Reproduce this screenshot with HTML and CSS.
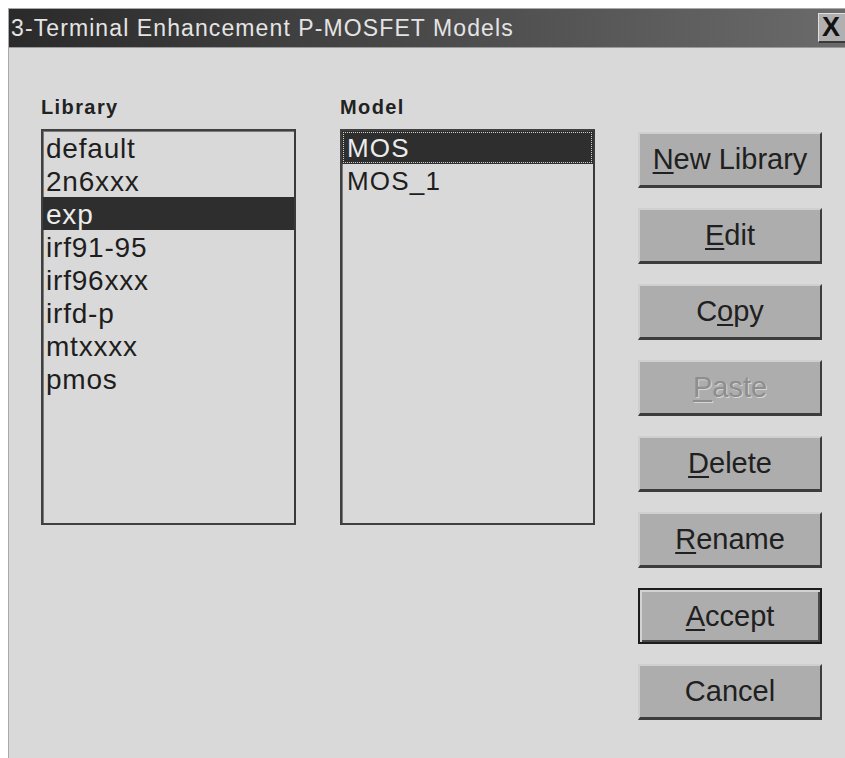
FILE: index.html
```html
<!DOCTYPE html>
<html lang="en">
<head>
<meta charset="utf-8">
<title>3-Terminal Enhancement P-MOSFET Models</title>
<link rel="stylesheet" href="styles.css">
</head>
<body>
<div class="window">
  <div class="titlebar">
    <span class="title">3-Terminal Enhancement P-MOSFET Models</span>
    <button class="close" type="button">X</button>
  </div>
  <div class="dialog">
    <div class="column">
      <div class="label">Library</div>
      <ul class="list">
        <li>default</li>
        <li>2n6xxx</li>
        <li class="selected">exp</li>
        <li>irf91-95</li>
        <li>irf96xxx</li>
        <li>irfd-p</li>
        <li>mtxxxx</li>
        <li>pmos</li>
      </ul>
    </div>
    <div class="column">
      <div class="label">Model</div>
      <ul class="list models">
        <li class="selected focused">MOS</li>
        <li>MOS_1</li>
      </ul>
    </div>
    <div class="buttons">
      <button class="btn" type="button"><u>N</u>ew Library</button>
      <button class="btn" type="button"><u>E</u>dit</button>
      <button class="btn" type="button">C<u>o</u>py</button>
      <button class="btn disabled" type="button"><u>P</u>aste</button>
      <button class="btn" type="button"><u>D</u>elete</button>
      <button class="btn" type="button"><u>R</u>ename</button>
      <button class="btn default" type="button"><u>A</u>ccept</button>
      <button class="btn" type="button">Cancel</button>
    </div>
  </div>
</div>
</body>
</html>
```
FILE: styles.css
```css
html, body {
  margin: 0;
  padding: 0;
  background: #ffffff;
  overflow: hidden;
  height: 758px;
}

body {
  padding: 8px 0 0 8px;
  font-family: "Liberation Sans", Arial, sans-serif;
}

.window {
  width: 852px;
  height: 760px;
  display: flex;
  flex-direction: column;
  background: #d9d9d9;
  border-top: 1px solid #a9a9a9;
  border-left: 1px solid #a9a9a9;
}

.titlebar {
  height: 38px;
  display: flex;
  align-items: center;
  justify-content: space-between;
  background: linear-gradient(to right, #2a2a2a 0%, #474747 45%, #6c6c6c 100%);
  border-bottom: 1px solid #9a9a9a;
  flex: none;
}

.title {
  color: #e4e4e4;
  font-size: 23px;
  letter-spacing: 1.1px;
  padding-left: 2px;
  white-space: nowrap;
}

.close {
  width: 34px;
  height: 30px;
  margin-right: 9px;
  padding: 0 0 0 3px;
  text-align: left;
  background: #b0b0b0;
  border: none;
  border-top: 1px solid #e0e0e0;
  border-left: 1px solid #e0e0e0;
  border-bottom: 2px solid #3a3a3a;
  font-family: "Liberation Sans", Arial, sans-serif;
  font-weight: bold;
  font-size: 27px;
  line-height: 27px;
  color: #111;
}

.dialog {
  display: flex;
  align-items: flex-start;
  padding: 46px 0 0 32px;
}

.column {
  width: 255px;
  margin-right: 44px;
  display: flex;
  flex-direction: column;
}

.column + .column {
  margin-right: 43px;
}

.label {
  font-size: 20px;
  font-weight: bold;
  letter-spacing: 1.4px;
  line-height: 26px;
  height: 26px;
  margin-bottom: 9px;
  color: #222;
}

.list {
  list-style: none;
  margin: 0;
  padding: 0;
  height: 396px;
  box-sizing: border-box;
  border: 2px solid #404040;
  border-right-color: #3a3a3a;
  box-shadow: inset 1px 1px 0 #7a7a7a;
}

.list li {
  height: 33px;
  line-height: 33px;
  padding: 1px 0 0 3px;
  box-sizing: border-box;
  font-size: 28px;
  letter-spacing: 0.8px;
  color: #1e1e1e;
  white-space: nowrap;
}

.models li {
  padding-left: 5px;
  letter-spacing: 1.2px;
  font-size: 26px;
}

.list li.selected {
  background: #2e2e2e;
  color: #ececec;
}

.list li.focused {
  outline: 1px dotted #d0d0d0;
  outline-offset: -2px;
}

.buttons {
  display: flex;
  flex-direction: column;
  gap: 20px;
  padding-top: 38px;
}

.btn {
  width: 184px;
  height: 56px;
  box-sizing: border-box;
  background: #adadad;
  border: none;
  border-top: 2px solid #cfcfcf;
  border-left: 2px solid #cfcfcf;
  border-right: 2px solid #3c3c3c;
  border-bottom: 3px solid #3c3c3c;
  font-family: "Liberation Sans", Arial, sans-serif;
  font-size: 29px;
  color: #202020;
  padding: 0;
  text-align: center;
}

.btn u {
  text-decoration-thickness: 2px;
  text-underline-offset: 3px;
}

.btn.disabled {
  color: #8e8e8e;
  text-shadow: 1px 1px 0 #d6d6d6;
}

.btn.default {
  border: 2px solid #1c1c1c;
  box-shadow: inset 2px 2px 0 #d2d2d2, inset -2px -2px 0 #4a4a4a;
}
```
